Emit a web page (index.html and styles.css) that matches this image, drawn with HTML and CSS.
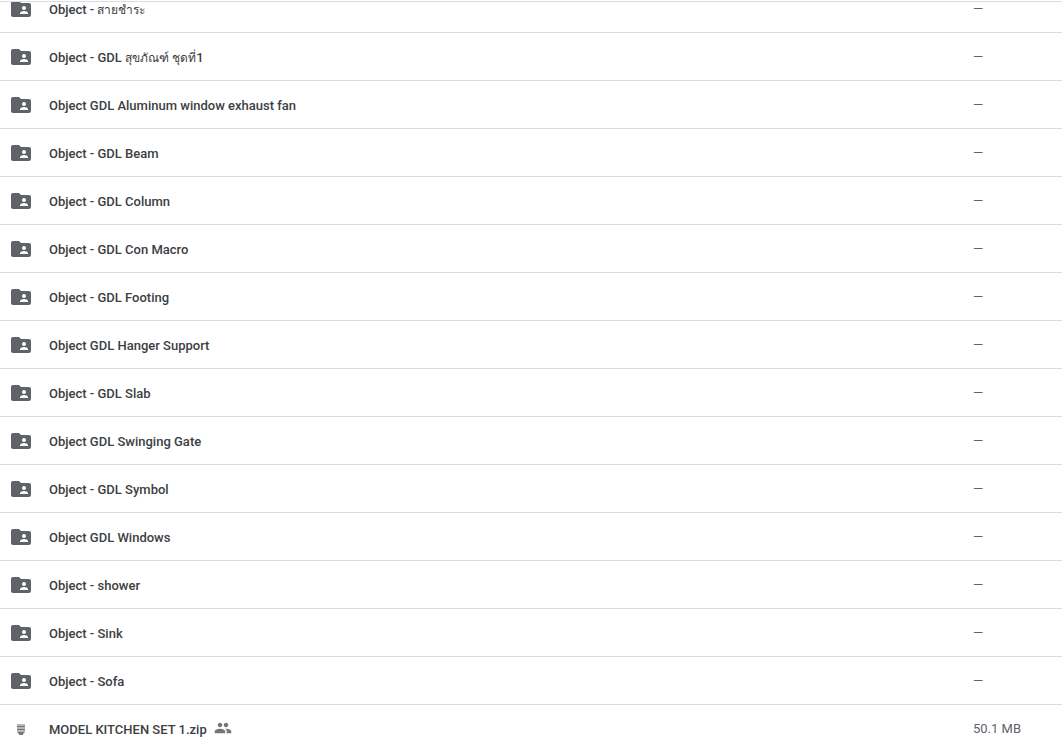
FILE: index.html
```html
<!DOCTYPE html>
<html lang="en">
<head>
  <meta charset="UTF-8">
  <meta name="viewport" content="width=device-width, initial-scale=1.0">
  <title>Files</title>
  <link rel="stylesheet" href="styles.css">
</head>
<body>
  <svg class="symbols" aria-hidden="true">
    <symbol id="folder" viewBox="0 0 24 24">
      <path d="M20 6h-8l-2-2H4c-1.100 0-1.990.9-1.990 2L2 18c0 1.100.9 2 2 2h16c1.100 0 2-.9 2-2V8c0-1.100-.9-2-2-2zm-5 3c1.100 0 2 .9 2 2s-.9 2-2 2-2-.9-2-2 .9-2 2-2zm4 8h-8v-1c0-1.330 2.670-2 4-2s4 .67 4 2v1z"/>
    </symbol>
    <symbol id="zip" viewBox="0 0 16 16">
      <path fill="#b8b8b8" d="M4 3h8v8H4z"/>
      <path d="M4 5h8v1H4zM4 8h8v1H4zM4 11h8l-2 2v1H6v-1z"/>
    </symbol>
    <symbol id="people" viewBox="0 0 24 24">
      <path d="M16 11c1.660 0 2.990-1.340 2.990-3S17.660 5 16 5s-3 1.340-3 3 1.340 3 3 3zm-8 0c1.660 0 2.990-1.340 2.990-3S9.660 5 8 5 5 6.340 5 8s1.340 3 3 3zm0 2c-2.330 0-7 1.170-7 3.500V19h14v-2.500C15 14.170 10.330 13 8 13zm8 0c-.29 0-.62.02-.97.05 1.160.84 1.970 1.970 1.970 3.450V19h6v-2.500c0-2.330-4.670-3.500-7-3.500z"/>
    </symbol>
  </svg>

  <main class="file-list">
    <table>
      <tbody>
        <tr><td class="icon"><svg><use href="#folder"/></svg></td><td class="name">Object - <span lang="th">สายชำระ</span></td><td class="size">—</td></tr>
        <tr><td class="icon"><svg><use href="#folder"/></svg></td><td class="name">Object - GDL <span lang="th">สุขภัณฑ์</span> <span lang="th">ชุดที่</span>1</td><td class="size">—</td></tr>
        <tr><td class="icon"><svg><use href="#folder"/></svg></td><td class="name">Object GDL Aluminum window exhaust fan</td><td class="size">—</td></tr>
        <tr><td class="icon"><svg><use href="#folder"/></svg></td><td class="name">Object - GDL Beam</td><td class="size">—</td></tr>
        <tr><td class="icon"><svg><use href="#folder"/></svg></td><td class="name">Object - GDL Column</td><td class="size">—</td></tr>
        <tr><td class="icon"><svg><use href="#folder"/></svg></td><td class="name">Object - GDL Con Macro</td><td class="size">—</td></tr>
        <tr><td class="icon"><svg><use href="#folder"/></svg></td><td class="name">Object - GDL Footing</td><td class="size">—</td></tr>
        <tr><td class="icon"><svg><use href="#folder"/></svg></td><td class="name">Object GDL Hanger Support</td><td class="size">—</td></tr>
        <tr><td class="icon"><svg><use href="#folder"/></svg></td><td class="name">Object - GDL Slab</td><td class="size">—</td></tr>
        <tr><td class="icon"><svg><use href="#folder"/></svg></td><td class="name">Object GDL Swinging Gate</td><td class="size">—</td></tr>
        <tr><td class="icon"><svg><use href="#folder"/></svg></td><td class="name">Object - GDL Symbol</td><td class="size">—</td></tr>
        <tr><td class="icon"><svg><use href="#folder"/></svg></td><td class="name">Object GDL Windows</td><td class="size">—</td></tr>
        <tr><td class="icon"><svg><use href="#folder"/></svg></td><td class="name">Object - shower</td><td class="size">—</td></tr>
        <tr><td class="icon"><svg><use href="#folder"/></svg></td><td class="name">Object - Sink</td><td class="size">—</td></tr>
        <tr><td class="icon"><svg><use href="#folder"/></svg></td><td class="name">Object - Sofa</td><td class="size">—</td></tr>
        <tr><td class="icon zip"><svg><use href="#zip"/></svg></td><td class="name">MODEL KITCHEN SET 1.zip<svg class="shared"><use href="#people"/></svg></td><td class="size">50.1 MB</td></tr>
      </tbody>
    </table>
  </main>
</body>
</html>
```
FILE: styles.css
```css
* {
  box-sizing: border-box;
}

body {
  margin: 0;
  padding-top: 1px;
  height: 100vh;
  overflow: hidden;
  background-color: #fff;
  font-family: Roboto, "Noto Sans", sans-serif;
  font-size: 13px;
  line-height: 20px;
}

.symbols {
  display: none;
}

.file-list {
  height: 100%;
  overflow: hidden;
  border-top: 1px solid #dadce0;
}

/* the list is scrolled part way into its first row */
table {
  width: 100%;
  margin-top: -17px;
  table-layout: fixed;
  border-collapse: separate;
  border-spacing: 0;
}

td {
  height: 48px;
  padding: 0;
  border-bottom: 1px solid #dadce0;
  vertical-align: middle;
}

.icon {
  width: 49px;
  padding-left: 9px;
}

.icon svg {
  display: block;
  width: 24px;
  height: 24px;
  fill: #5f6368;
}

.icon.zip {
  padding-left: 13px;
}

.zip svg {
  width: 16px;
  height: 16px;
  fill: #757575;
}

.name {
  padding-top: 2px;
  color: #3c4043;
  font-weight: 500;
  white-space: nowrap;
}

.name span {
  font-size: 12px;
}

.shared {
  width: 18px;
  height: 18px;
  margin: -5px 0 0 7px;
  vertical-align: middle;
  fill: #757575;
}

.size {
  width: 89px;
  color: #5f6368;
}
```
